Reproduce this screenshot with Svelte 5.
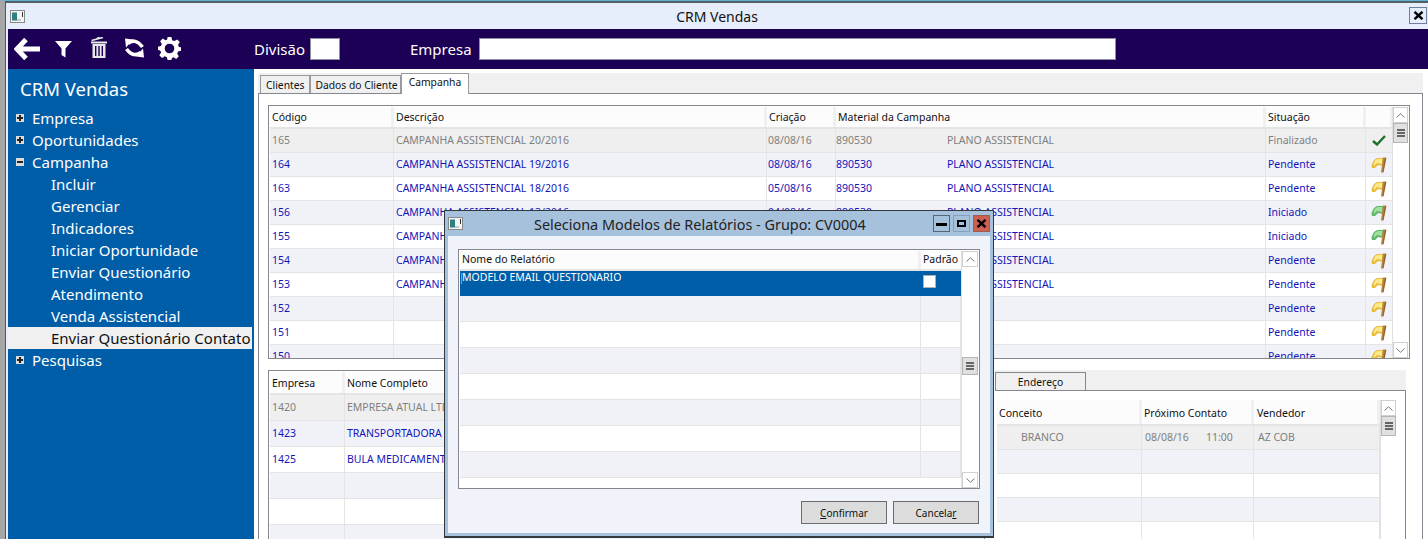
<script>
  const menu = [
    { t: 'Empresa', k: 'plus' }, { t: 'Oportunidades', k: 'plus' }, { t: 'Campanha', k: 'minus' },
    { t: 'Incluir' }, { t: 'Gerenciar' }, { t: 'Indicadores' }, { t: 'Iniciar Oportunidade' },
    { t: 'Enviar Questionário' }, { t: 'Atendimento' }, { t: 'Venda Assistencial' },
    { t: 'Enviar Questionário Contato', active: true }, { t: 'Pesquisas', k: 'plus' }
  ];
  const heads = ['Código', 'Descrição', 'Criação', 'Material da Campanha', 'Situação', ''];
  const rows = [
    ['165', 'CAMPANHA ASSISTENCIAL 20/2016', '08/08/16', 'Finalizado', 'check', true],
    ['164', 'CAMPANHA ASSISTENCIAL 19/2016', '08/08/16', 'Pendente', 'y'],
    ['163', 'CAMPANHA ASSISTENCIAL 18/2016', '05/08/16', 'Pendente', 'y'],
    ['156', 'CAMPANHA ASSISTENCIAL 13/2016', '04/08/16', 'Iniciado', 'g'],
    ['155', 'CAMPANHA ASSISTENCIAL 12/2016', '04/08/16', 'Iniciado', 'g'],
    ['154', 'CAMPANHA ASSISTENCIAL 11/2016', '04/08/16', 'Pendente', 'y'],
    ['153', 'CAMPANHA ASSISTENCIAL 10/2016', '04/08/16', 'Pendente', 'y'],
    ['152', '', '', 'Pendente', 'y'],
    ['151', '', '', 'Pendente', 'y'],
    ['150', '', '', 'Pendente', 'y']
  ];
  const people = [
    ['1420', 'EMPRESA ATUAL LTDA', true], ['1423', 'TRANSPORTADORA LTDA'], ['1425', 'BULA MEDICAMENTOS LTDA'],
    ['', ''], ['', ''], ['', '']
  ];
</script>

{#snippet winicon()}
  <svg class="winicon" width="15" height="13" viewBox="0 0 15 13">
    <rect x="0.5" y="0.5" width="14" height="12" fill="#f4f4f4" stroke="#8a8a8a" />
    <rect x="2" y="2.5" width="5" height="8" fill="#2f7f80" />
    <rect x="7" y="9" width="4" height="2" fill="#c8c8c8" />
    <rect x="12" y="2" width="1" height="5" fill="#333" />
  </svg>
{/snippet}

{#snippet flag(color)}
  <svg width="16" height="16" viewBox="0 0 16 16">
    <path d="M0.5 8 L3 3 L6 1 L13 1 L12.5 9 L7 8 L4 11 L1 11 Z" fill={color === 'y' ? '#e8bb3c' : '#5fb46a'} />
    <path d="M4 3.5 L6.5 2 L11.5 2 L11 7 L6 6 L3 9 L2.5 7.5 Z" fill={color === 'y' ? '#fbe98c' : '#9fe09f'} />
    <path d="M12 0.5 H15.5 L12.6 15.5 H10 Z" fill="#b5833f" />
    <path d="M14 1 H15 L12.3 15 H11.6 Z" fill="#8a5f28" />
  </svg>
{/snippet}

{#snippet scrollbar(kind)}
  <div class="scroll {kind}">
    <div class="sbtn"><svg width="9" height="5" viewBox="0 0 9 5"><path d="M0.5 4.5 L4.5 0.8 L8.5 4.5" fill="none" stroke="#777" /></svg></div>
    <div class="thumb"><i></i><i></i><i></i></div>
    <div class="strack"></div>
    <div class="sbtn"><svg width="9" height="5" viewBox="0 0 9 5"><path d="M0.5 0.5 L4.5 4.2 L8.5 0.5" fill="none" stroke="#777" /></svg></div>
  </div>
{/snippet}

<div class="window">
  <div class="frame">
    <header class="titlebar">
      {@render winicon()}
      <span class="title">CRM Vendas</span>
      <button class="close" aria-label="Fechar">
        <svg width="11" height="9" viewBox="0 0 11 9"><path d="M1.5 0.8 L9.5 8.2 M9.5 0.8 L1.5 8.2" stroke="#000" stroke-width="2.4" /></svg>
      </button>
    </header>

    <div class="toolbar">
      <div class="tools">
        <svg width="26" height="22" viewBox="0 0 26 22"><path d="M12 1.5 L3 11 L12 20.5 M4 11 L26 11" fill="none" stroke="#fff" stroke-width="5" /></svg>
        <svg class="t-filter" width="17" height="18" viewBox="0 0 17 18"><path d="M0 1 H17 L10.5 8.5 V17.5 L6.5 15 V8.5 Z" fill="#fff" /></svg>
        <svg class="t-trash" width="16" height="22" viewBox="0 0 16 22"><path d="M0.5 3.5 L12 0.5 M5 2.5 L7.5 0.5 L9 1.5" stroke="#e8e8e8" stroke-width="1.6" fill="none" /><path d="M1.5 7 H14.5 V21 H1.5 Z" fill="#e8e8e8" /><path d="M4.7 9 V19 M8 9 V19 M11.3 9 V19" stroke="#1b0055" stroke-width="1.4" /><path d="M0 5.5 H16" stroke="#e8e8e8" stroke-width="2" /></svg>
        <svg class="t-sync" width="19" height="20" viewBox="0 0 19 20"><path d="M3 5.5 Q10 -0.5 17.5 9 M1.5 11 Q8 20 16 14.5" fill="none" stroke="#fff" stroke-width="3.6" /><path d="M0 0.5 L8 1.5 L1 9.5 Z M19 19.5 L11 18.5 L18 10.5 Z" fill="#fff" /></svg>
        <svg class="t-gear" width="23" height="23" viewBox="0 0 24 24"><path fill="#fff" fill-rule="evenodd" d="M10 0 H14 L14.7 3.3 L17.2 4.3 L20 2.5 L22.8 5.3 L20.9 8.2 L21.9 10.5 L24 10.7 V14.3 L21 15 L20 17.4 L21.7 20.2 L19 23 L16.1 21.1 L14.6 21.8 L14 24 H10 L9.3 21 L7 20 L4.2 21.8 L1.4 19 L3.2 16.2 L2.3 14 L0 13.6 V10.2 L3 9.5 L4 7.2 L2.2 4.4 L5 1.6 L7.8 3.4 L9.6 2.7 Z M12 7 A5 5 0 1 0 12 17 A5 5 0 1 0 12 7 Z" /></svg>
      </div>
      <label class="fld div"><span class="lbl l1">Divisão</span><span class="inp small"></span></label>
      <label class="fld emp"><span class="lbl l2">Empresa</span><span class="inp big"></span></label>
    </div>

    <div class="content">
      <nav class="sidebar">
        <h1>CRM Vendas</h1>
        <ul>
          {#each menu as m}
            <li class:sub={!m.k} class:active={m.active}>
              {#if m.k}
                <span class="box"><i></i>{#if m.k === 'plus'}<b></b>{/if}</span>
              {/if}
              {m.t}
            </li>
          {/each}
        </ul>
      </nav>

      <main class="main">
        <div class="tabs">
          <span class="tab">Clientes</span>
          <span class="tab wide">Dados do Cliente</span>
          <span class="tab on">Campanha</span>
        </div>
        <div class="panel">
          <div class="table t1">
            <div class="grid-wrap">
              <div class="row head c1">
                {#each heads as h}<span>{h}</span>{/each}
              </div>
              {#each rows as r, i}
                <div class="row c1" class:dim={r[5]} class:odd={i % 2 === 1}>
                  <span>{r[0]}</span>
                  <span>{r[1]}</span>
                  <span class="date">{r[2]}</span>
                  <span class="mat"><em>{i < 7 ? '890530' : ''}</em><em>{i < 7 ? 'PLANO ASSISTENCIAL' : ''}</em></span>
                  <span>{r[3]}</span>
                  <span class="ico">
                    {#if r[4] === 'check'}
                      <svg width="14" height="11" viewBox="0 0 14 11"><path d="M1 6 L5 9.5 L13 1" fill="none" stroke="#1e6e28" stroke-width="2.4" /></svg>
                    {:else}
                      {@render flag(r[4])}
                    {/if}
                  </span>
                </div>
              {/each}
            </div>
            {@render scrollbar('s1')}
          </div>

          <div class="bottom">
            <div class="table t2">
              <div class="grid-wrap">
                <div class="row head c2"><span>Empresa</span><span>Nome Completo</span><span></span><span></span><span></span></div>
                {#each people as p, i}
                  <div class="row c2" class:dim={p[2]} class:odd={i % 2 === 1 || i === 3 || i === 5}>
                    <span>{p[0]}</span><span>{p[1]}</span><span></span><span></span><span></span>
                  </div>
                {/each}
              </div>
            </div>

            <section class="right">
              <div class="rtabs"><span class="rtab">Endereço</span></div>
              <div class="rpanel">
                <div class="grid-wrap">
                  <div class="row head c3"><span>Conceito</span><span>Próximo Contato</span><span>Vendedor</span></div>
                  <div class="row c3 dim"><span class="ind">BRANCO</span><span class="when"><em>08/08/16</em><em>11:00</em></span><span class="seller">AZ COB</span></div>
                  <div class="row c3 odd"><span></span><span></span><span></span></div>
                  <div class="row c3"><span></span><span></span><span></span></div>
                  <div class="row c3 odd"><span></span><span></span><span></span></div>
                  <div class="row c3"><span></span><span></span><span></span></div>
                </div>
                {@render scrollbar('s3')}
              </div>
            </section>
          </div>
        </div>
      </main>
    </div>
  </div>

  <div class="dialog" role="dialog">
    <header class="dtitle">
      {@render winicon()}
      <span class="dname">Seleciona Modelos de Relatórios - Grupo: CV0004</span>
      <div class="dbtns">
        <button class="wb" aria-label="Minimizar"><svg width="11" height="4" viewBox="0 0 11 4"><rect width="11" height="3" y="1" fill="#000" /></svg></button>
        <button class="wb soft" aria-label="Maximizar"><svg width="9" height="7" viewBox="0 0 9 7"><rect x="1" y="1" width="7" height="5" fill="none" stroke="#000" stroke-width="2" /></svg></button>
        <button class="wb red" aria-label="Fechar"><svg width="11" height="9" viewBox="0 0 11 9"><path d="M1.5 0.8 L9.5 8.2 M9.5 0.8 L1.5 8.2" stroke="#000" stroke-width="2.4" /></svg></button>
      </div>
    </header>
    <div class="dbody">
      <div class="table t3">
        <div class="grid-wrap">
          <div class="row head c4"><span>Nome do Relatório</span><span>Padrão</span></div>
          <div class="row c4 sel"><span><u class="caret"></u>MODELO EMAIL QUESTIONARIO</span><span><i class="chk"></i></span></div>
          {#each [1, 0, 1, 0, 1, 0, 1] as o}
            <div class="row c4" class:odd={o === 1}><span></span><span></span></div>
          {/each}
        </div>
        {@render scrollbar('s4')}
      </div>
      <div class="actions">
        <button class="btn"><u>C</u>onfirmar</button>
        <button class="btn">Cancela<u>r</u></button>
      </div>
    </div>
  </div>
</div>

<style>
  :global(body) { margin: 0; overflow: hidden; background: #fff; }
  .window {
    position: relative; width: 1428px; height: 539px; overflow: hidden;
    box-sizing: border-box; font-family: "Noto Sans", sans-serif;
    border-top: 1px solid #5fb2d0; border-left: 5px solid #a6a6a6;
  }
  .frame {
    height: 100%; display: flex; flex-direction: column; box-sizing: border-box;
    border-top: 2px solid #555f68; border-left: 1px solid #555; padding-left: 2px; background: #e6edfb;
  }
  .titlebar { height: 26px; display: flex; align-items: center; position: relative; margin-left: -2px; padding-left: 4px; flex: none; }
  .winicon { flex: none; }
  .title { position: absolute; left: 0; right: 0; text-align: center; font-size: 14px; color: #111; top: 4px; }
  .close {
    position: absolute; right: 1px; top: 4px; width: 18px; height: 17px; padding: 0; background: #e6edfb;
    border: 1px solid #6f7f9f; display: flex; align-items: center; justify-content: center;
  }
  .toolbar { height: 40px; background: #1b0055; display: flex; align-items: center; flex: none; color: #fff; position: relative; }
  .tools { display: flex; align-items: center; width: 246px; padding-left: 6px; box-sizing: border-box; }
  .t-filter { margin-left: 15px; }
  .t-trash { margin-left: 19px; margin-top: -3px; }
  .t-sync { margin-left: 18px; margin-top: -3px; }
  .t-gear { margin-left: 14px; margin-top: -2px; }
  .fld { display: flex; align-items: center; font-size: 15px; }
  .lbl { display: block; }
  .l1 { width: 56px; }
  .l2 { width: 69px; }
  .emp { margin-left: 70px; }
  .inp { display: block; background: #fff; height: 22px; box-sizing: border-box; border: 1px solid #8f8f9f; }
  .small { width: 30px; }
  .big { width: 637px; }

  .content { flex: 1; min-height: 0; display: flex; }
  .sidebar { width: 246px; flex: none; background: #005da8; color: #fff; box-sizing: border-box; }
  .sidebar h1 { font-weight: 400; font-size: 18.5px; margin: 0; padding: 8px 0 0 12px; line-height: 24px; height: 38px; box-sizing: border-box; }
  .sidebar ul { list-style: none; margin: 0; padding: 0; }
  .sidebar li { height: 22px; line-height: 22px; font-size: 15px; display: flex; align-items: center; padding-left: 8px; white-space: nowrap; margin-right: 2px; }
  .sidebar li.sub { padding-left: 43px; }
  .sidebar li.active { background: #f0f0f0; color: #111; }
  .box { width: 8px; height: 8px; background: #dcdcdc; margin-right: 8px; position: relative; flex: none; }
  .box i { position: absolute; left: 1px; right: 1px; top: 3px; height: 2px; background: #222; }
  .box b { position: absolute; top: 1px; bottom: 1px; left: 3px; width: 2px; background: #222; }

  .main { flex: 1; min-width: 0; background: #fff; padding: 4px 5px 0 4px; display: flex; flex-direction: column; }
  .tabs { height: 20px; background: #f0f0f0; display: flex; align-items: flex-end; padding-left: 2px; flex: none; position: relative; z-index: 1; }
  .tab { height: 18px; line-height: 18px; box-sizing: border-box; border: 1px solid #9a9aa0; border-bottom: 0; padding: 0 5px; font-size: 10.3px; color: #111; background: #f0f0f0; }
  .tab.wide { padding: 0 2px 0 4px; }
  .tab.on { height: 21px; line-height: 17px; background: #fff; margin-bottom: -1px; padding: 0 7px; }
  .panel { flex: 1; min-height: 0; border: 1px solid #868690; border-bottom: 0; padding: 11px 12px 0 9px; background: #fff; }
  .table { display: flex; border: 1px solid #868690; padding: 1px 1px 0; box-sizing: border-box; background: #fff; overflow: hidden; }
  .t1 { height: 254px; width: 1142px; }
  .grid-wrap { flex: 1; min-width: 0; overflow: hidden; }

  .row { display: grid; font-size: 10.5px; color: #1414b8; background: #fff; box-sizing: border-box; border-bottom: 1px solid #e4e4e4; height: 24px; }
  .row > span { border-right: 1px solid #e4e4e4; padding-left: 2px; line-height: 22px; white-space: nowrap; overflow: hidden; display: block; min-width: 0; }
  .row.odd { background: #f0f2f8; }
  .row.dim { background: #efefef; color: #808080; }
  .row.head { height: 22px; color: #111; background: #fcfcfc; border-bottom: 2px solid #e4e4e4; }
  .row.head > span { border-right: 3px solid #f0f0f0; line-height: 21px; }
  .c1 { grid-template-columns: 124px 373px 69px 430px 100px 27px; }
  .row > .date { padding-left: 1px; }
  .row > .mat { display: flex; padding-left: 0; }
  .mat em { font-style: normal; }
  .mat em:first-child { width: 111px; flex: none; }
  .row > .ico { display: flex; align-items: center; justify-content: center; padding-left: 0; }

  .scroll { width: 16px; flex: none; display: flex; flex-direction: column; border-left: 1px solid #e0e0e0; box-sizing: border-box; background: #fff; }
  .sbtn { height: 16px; flex: none; border: 1px solid #d0d0d0; display: flex; align-items: center; justify-content: center; background: #fff; box-sizing: border-box; }
  .thumb { height: 20px; flex: none; background: #e0e0e0; border: 1px solid #b4b4b4; box-sizing: border-box; display: flex; flex-direction: column; align-items: center; justify-content: center; gap: 1px; }
  .thumb i { display: block; width: 8px; height: 2px; background: #666; }
  .strack { flex: 1; }
  .s4 .thumb { height: 18px; margin-top: 90px; }

  .bottom { display: flex; margin-top: 11px; height: 200px; }
  .t2 { width: 717px; flex: none; height: 200px; }
  .c2 { grid-template-columns: 75px 446px 20px 56px 1fr; }
  .t2 .row { height: 26px; }
  .t2 .row > span { line-height: 24px; }
  .t2 .row.head { height: 23px; }
  .t2 .row.head > span { line-height: 22px; }
  .right { margin-left: 10px; width: 411px; flex: none; display: flex; flex-direction: column; }
  .rtabs { height: 20px; background: #f0f0f0; display: flex; align-items: flex-end; flex: none; }
  .rtab { width: 91px; height: 18px; box-sizing: border-box; border: 1px solid #868690; border-bottom: 0; text-align: center; font-size: 10.3px; line-height: 18px; color: #111; }
  .rpanel { flex: 1; display: flex; border-top: 1px solid #868690; border-right: 1px solid #868690; padding: 9px 9px 0 2px; box-sizing: border-box; }
  .c3 { grid-template-columns: 145px 112px 126px; }
  .rpanel .row { height: 24px; }
  .rpanel .row.head { height: 26px; }
  .rpanel .row.head > span { line-height: 26px; }
  .row > .ind { padding-left: 24px; }
  .row > .when { display: flex; padding-left: 3px; }
  .when em { font-style: normal; }
  .when em:first-child { width: 61px; }
  .row > .seller { padding-left: 4px; }
  .rpanel .row.head > span:last-child { padding-left: 3px; }

  .dialog {
    position: absolute; left: 439px; top: 209px; width: 550px; height: 328px; box-sizing: border-box;
    border: 1px solid #33393f; border-width: 1px 1px 2px 1px; background: #a6c1dc; display: flex; flex-direction: column;
  }
  .dtitle { height: 25px; flex: none; display: flex; align-items: center; padding-left: 3px; position: relative; }
  .dname { position: absolute; left: 89px; top: 4px; font-size: 14.4px; color: #222; white-space: nowrap; }
  .dbtns { position: absolute; right: 3px; top: 4px; display: flex; gap: 3px; }
  .wb { width: 17px; height: 17px; padding: 0; display: flex; align-items: center; justify-content: center; background: #a6c1dc; border: 1px solid #56667a; }
  .wb.soft { border-color: #86a0bc; }
  .wb.red { background: #cd6050; border-color: #a05a50; }
  .dbody { flex: 1; margin: 0 3px 3px 3px; background: #f0f3fa; padding: 13px 9px 0 10px; min-height: 0; }
  .t3 { height: 240px; width: 522px; }
  .c4 { grid-template-columns: 461px 1fr; }
  .t3 .row { height: 26px; }
  .t3 .row.head { height: 20px; }
  .t3 .row.head > span { line-height: 17px; }
  .t3 .row.head > span:last-child { border-right: 0; }
  .t3 .row.sel { height: 25px; background: #005da8; color: #fff; border-bottom: 0; }
  .t3 .row.sel > span { border-right: 0; line-height: 12px; position: relative; overflow: visible; }
  .caret { position: absolute; left: 1px; top: 2px; width: 1px; height: 11px; background: #d08a40; }
  .chk { display: block; width: 13px; height: 13px; background: #fff; border: 1px solid #b0b0b0; box-sizing: border-box; margin: 4px 0 0 0; }
  .t3 .s4 { width: 17px; }
  .actions { display: flex; justify-content: flex-end; gap: 6px; margin-top: 12px; padding-right: 2px; }
  .btn { width: 86px; height: 23px; padding: 0; background: #dcdcdc; border: 1px solid #6c6c6c; font: 10px "Noto Sans", sans-serif; color: #111; }
</style>
